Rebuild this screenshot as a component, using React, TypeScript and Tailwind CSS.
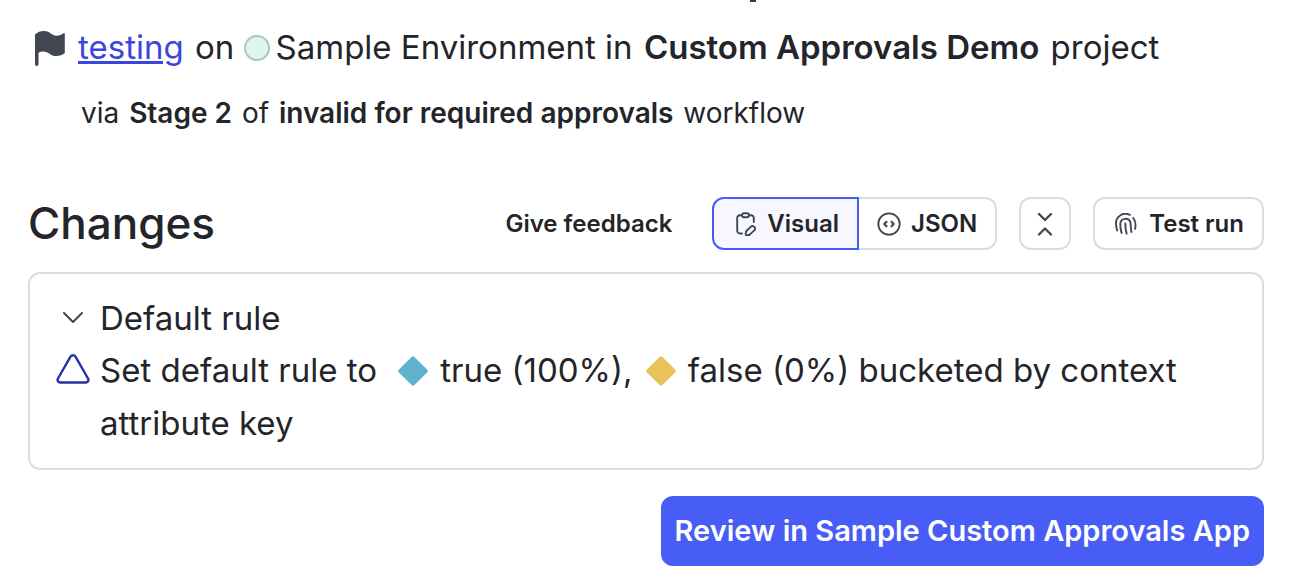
import React from 'react';

type IconProps = { className?: string };

const FlagIcon = ({ className }: IconProps) => (
  <svg viewBox="0 0 30 35" fill="currentColor" className={className} aria-hidden="true">
    <path d="M0 3.5C2.5 1 5.5 0 9 0c6.500 0 7.500 4.800 12.500 4.800 3 0 5.300-1.300 7-2.500.7-.4 1.300-.2 1.300.6V22c-2.300 2-5 3-8.300 3-6.500 0-7.500-4.600-13-4.600-2 0-3.700.5-5 1.300v11.500a1.700 1.700 0 0 1-3.500 0z" />
  </svg>
);

const ClipboardEditIcon = ({ className }: IconProps) => (
  <svg viewBox="0 0 20 24" fill="none" stroke="currentColor" strokeWidth="1.900" strokeLinecap="round" strokeLinejoin="round" className={className} aria-hidden="true">
    <path d="M6 21.500H4A2.800 2.800 0 0 1 1.200 18.700V6A2.800 2.800 0 0 1 4 3.200H6M13 3.200h2A2.800 2.800 0 0 1 17.800 6V10" />
    <rect x="6" y="1.200" width="7" height="4" rx="2" />
    <path d="M10.200 19.200l4.500-4.300a2.500 2.500 0 0 1 3.600 3.500l-4.600 4.200c-.8.500-2 .6-3.900.4-.2-1.600 0-3 .4-3.800z" />
  </svg>
);

const CodeCircleIcon = ({ className }: IconProps) => (
  <svg viewBox="0 0 22 22" fill="none" stroke="currentColor" strokeLinecap="round" strokeLinejoin="round" className={className} aria-hidden="true">
    <circle cx="11" cy="11" r="9.800" strokeWidth="1.700" />
    <path d="M8.700 9L6.700 11l2 2M13.300 9l2 2-2 2" strokeWidth="2" />
  </svg>
);

const CollapseIcon = ({ className }: IconProps) => (
  <svg viewBox="0 0 16 24" fill="none" stroke="currentColor" strokeWidth="2.300" strokeLinecap="round" strokeLinejoin="round" className={className} aria-hidden="true">
    <path d="M2 2l6 6 6-6M2 22.500l6-6 6 6" />
  </svg>
);

const FingerprintIcon = ({ className }: IconProps) => (
  <svg viewBox="0 0 22 22" fill="none" stroke="currentColor" strokeWidth="1.900" strokeLinecap="round" className={className} aria-hidden="true">
    <path d="M2.200 17.500C1.300 15 1 13 1 10.500A9.500 9.500 0 0 1 14.800 1.800M18.300 5c2.200 3 2.700 6.500 1.800 10.800" />
    <path d="M6.600 20C5.400 16.800 5.200 14 5.300 10.500a5.200 5.200 0 0 1 10.200-.8c.3 2.600.1 5.600.9 9.300" />
    <path d="M10.300 10.500c0 3.700.2 6.700 1.400 10.200" />
  </svg>
);

const ChevronDownIcon = ({ className }: IconProps) => (
  <svg viewBox="0 0 20 12" fill="none" stroke="currentColor" strokeWidth="2" strokeLinecap="round" strokeLinejoin="round" className={className} aria-hidden="true">
    <path d="M1 1l9 9 9-9" />
  </svg>
);

const TriangleIcon = ({ className }: IconProps) => (
  <svg viewBox="0 0 34 30" fill="none" stroke="currentColor" strokeWidth="2.400" strokeLinejoin="round" className={className} aria-hidden="true">
    <path d="M14.500 2.600a3 3 0 0 1 5 0L32 24.500a2.600 2.600 0 0 1-2.200 4H4.200a2.600 2.600 0 0 1-2.200-4z" />
  </svg>
);

const DiamondIcon = ({ className }: IconProps) => (
  <svg viewBox="0 0 30 30" fill="currentColor" className={className} aria-hidden="true">
    <path d="M13.600.9a2 2 0 0 1 2.800 0l12.700 12.700a2 2 0 0 1 0 2.800L16.400 29.100a2 2 0 0 1-2.800 0L.9 16.400a2 2 0 0 1 0-2.800z" />
  </svg>
);

const outlineButton =
  'flex items-center justify-center h-[53px] border-2 border-[#d8dde3] rounded-xl bg-white text-2xl font-semibold';

export default function App() {
  return (
    <main className="bg-white pl-7 pr-[38px] pb-3 font-['Inter',sans-serif] text-[#23252a]">
      {/* Tail of the heading scrolled above */}
      <div className="flex justify-center pl-[213px]">
        <span className="w-1.5 h-0.5 bg-[#3a3b40]" />
      </div>

      <section className="pt-5">
        <div className="flex items-start pl-[7px] text-[33px] leading-[50px]">
          <FlagIcon className="w-[30px] h-[35px] mt-[9px] mr-[13px] shrink-0 text-[#414650]" />
          <p>
            <a href="#testing" className="mr-0.5 text-[#3b47dc] underline decoration-[3px] underline-offset-2">testing</a>
            {' on '}
            <span className="inline-block size-[26px] rounded-full border-2 border-[#b0c7bd] bg-[#dcf8ea] align-[-2px] mr-1.5" />
            {'Sample Environment in '}
            <strong className="mx-0.5 font-semibold">Custom Approvals Demo</strong>
            {' project'}
          </p>
        </div>
        <p className="mt-[18px] pl-[53px] text-[28px] leading-[46px]">
          {'via '}
          <strong className="mx-0.5 font-semibold">Stage 2</strong>
          {' of '}
          <strong className="mx-0.5 font-semibold">invalid for required approvals</strong>
          {' workflow'}
        </p>
      </section>

      <section className="pt-[61px]">
        <div className="flex items-center justify-between">
          <h2 className="text-[44px] leading-[53px] font-medium">Changes</h2>
          <div className="flex items-center">
            <button type="button" className="mr-10 text-2xl font-semibold">Give feedback</button>
            <div className="flex mr-[22px]">
              <button type="button" aria-pressed="true" className="flex items-center h-[53px] px-[18px] gap-[11px] border-2 border-[#465df5] rounded-l-xl bg-[#f7f8ff] text-2xl font-semibold">
                <ClipboardEditIcon className="w-5 h-6 ml-1 text-[#414650]" />
                Visual
              </button>
              <button type="button" aria-pressed="false" className="flex items-center h-[53px] px-[18px] gap-2.5 border-2 border-l-0 border-[#d8dde3] rounded-r-xl bg-white text-2xl font-semibold">
                <CodeCircleIcon className="size-6 text-[#414650]" />
                JSON
              </button>
            </div>
            <button type="button" aria-label="Collapse all" className={`${outlineButton} w-[52px] mr-[22px]`}>
              <CollapseIcon className="w-4 h-6 text-[#414650]" />
            </button>
            <button type="button" className={`${outlineButton} pl-5 pr-[18px] gap-3`}>
              <FingerprintIcon className="size-[22px] text-[#414650]" />
              Test run
            </button>
          </div>
        </div>

        <div className="mt-[22px] border-2 border-[#d8dde3] rounded-xl pl-[26px] pr-6 py-[18px] text-[33px] leading-[53px]">
          <button type="button" aria-expanded="true" className="flex items-center leading-[52px]">
            <span className="w-[34px] flex justify-center mr-[10px]">
              <ChevronDownIcon className="w-5 h-3 text-[#414650]" />
            </span>
            Default rule
          </button>
          <div className="flex">
            <TriangleIcon className="w-[34px] h-[30px] mt-[10px] mr-[10px] shrink-0 text-[#2532a8]" />
            <p>
              {'Set default rule to '}
              <DiamondIcon className="inline-block size-[30px] mx-3 align-[-4px] text-[#5db3ce]" />
              {'true (100%), '}
              <DiamondIcon className="inline-block size-[30px] ml-1 mr-3 align-[-4px] text-[#e8c35a]" />
              {'false (0%) bucketed by context attribute key'}
            </p>
          </div>
        </div>
      </section>

      <div className="flex justify-end mt-[26px]">
        <button type="button" className="h-[70px] px-3.5 rounded-xl bg-[#485df6] text-[29px] font-semibold text-white">
          Review in Sample Custom Approvals App
        </button>
      </div>
    </main>
  );
}
